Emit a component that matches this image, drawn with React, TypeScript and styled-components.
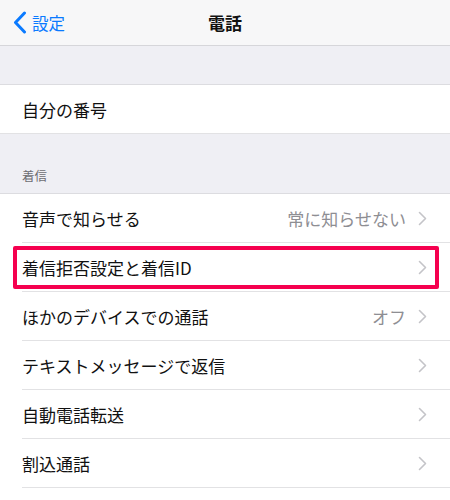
import React from "react";
import styled, { createGlobalStyle } from "styled-components";

const Global = createGlobalStyle`
  html, body { margin: 0; padding: 0; background: #ffffff; }
  body { font-family: "Noto Sans CJK JP", "Noto Sans", sans-serif; -webkit-font-smoothing: antialiased; }
`;

const Page = styled.div`
  width: 450px;
  height: 500px;
  overflow: hidden;
  background: #ffffff;
  display: flex;
  flex-direction: column;
`;

const NavBar = styled.div`
  height: 45px;
  flex: 0 0 45px;
  background: #f7f7f8;
  border-bottom: 1px solid #d6d6da;
  display: grid;
  grid-template-columns: 1fr auto 1fr;
  align-items: center;
`;

const Back = styled.div`
  display: flex;
  align-items: center;
  gap: 5px;
  padding-left: 13px;
  color: #0a7aff;
  font-size: 16.5px;
`;

const Title = styled.div`
  font-size: 17px;
  font-weight: 700;
  color: #111;
`;

const Gap = styled.div<{ h: number }>`
  height: ${(p) => p.h}px;
  flex: 0 0 ${(p) => p.h}px;
  background: #efeff4;
  border-bottom: 1px solid #dcdce0;
  box-sizing: border-box;
  display: flex;
  align-items: flex-end;
`;

const SectionHeader = styled.div`
  padding: 0 0 8px 22px;
  font-size: 12.5px;
  color: #6d6d72;
`;

const Group = styled.div`
  background: #fff;
  display: flex;
  flex-direction: column;
`;

const Row = styled.div<{ last?: boolean }>`
  position: relative;
  height: 49px;
  flex: 0 0 49px;
  box-sizing: border-box;
  display: flex;
  align-items: center;
  padding: 0 22px 0 22px;
  &::after {
    content: "";
    position: absolute;
    left: ${(p) => (p.last ? 0 : 22)}px;
    right: 0;
    bottom: 0;
    height: 1px;
    background: #e2e2e4;
  }
`;

const Label = styled.div`
  flex: 1;
  font-size: 17px;
  color: #111;
  white-space: nowrap;
`;

const Value = styled.div`
  font-size: 17px;
  color: #8e8e93;
  margin-right: 12px;
  white-space: nowrap;
`;

const Highlight = styled.div`
  position: absolute;
  left: 13px;
  right: 11px;
  top: 3px;
  bottom: 3px;
  border: 4px solid #f5004f;
  border-radius: 2px;
  pointer-events: none;
`;

const Chevron = () => (
  <svg width="9" height="15" viewBox="0 0 9 15" style={{ marginRight: 1 }}>
    <path d="M1.5 1.5 L7.5 7.5 L1.5 13.5" fill="none" stroke="#c4c4c8" strokeWidth="1.6" strokeLinecap="round" strokeLinejoin="round" />
  </svg>
);

const BackIcon = () => (
  <svg width="14" height="23" viewBox="0 0 14 23">
    <path d="M11.5 2 L2.5 11.5 L11.5 21" fill="none" stroke="#0a7aff" strokeWidth="3" strokeLinecap="round" strokeLinejoin="round" />
  </svg>
);

type Item = { label: string; value?: string; highlight?: boolean };

const items: Item[] = [
  { label: "音声で知らせる", value: "常に知らせない" },
  { label: "着信拒否設定と着信ID", highlight: true },
  { label: "ほかのデバイスでの通話", value: "オフ" },
  { label: "テキストメッセージで返信" },
  { label: "自動電話転送" },
  { label: "割込通話" },
];

export default function App() {
  return (
    <Page>
      <Global />
      <NavBar>
        <Back>
          <BackIcon />
          <span>設定</span>
        </Back>
        <Title>電話</Title>
        <div />
      </NavBar>
      <Gap h={39} />
      <Group>
        <Row last>
          <Label>自分の番号</Label>
        </Row>
      </Group>
      <Gap h={60}>
        <SectionHeader>着信</SectionHeader>
      </Gap>
      <Group>
        {items.map((it) => (
          <Row key={it.label}>
            <Label>{it.label}</Label>
            {it.value && <Value>{it.value}</Value>}
            <Chevron />
            {it.highlight && <Highlight />}
          </Row>
        ))}
      </Group>
    </Page>
  );
}
